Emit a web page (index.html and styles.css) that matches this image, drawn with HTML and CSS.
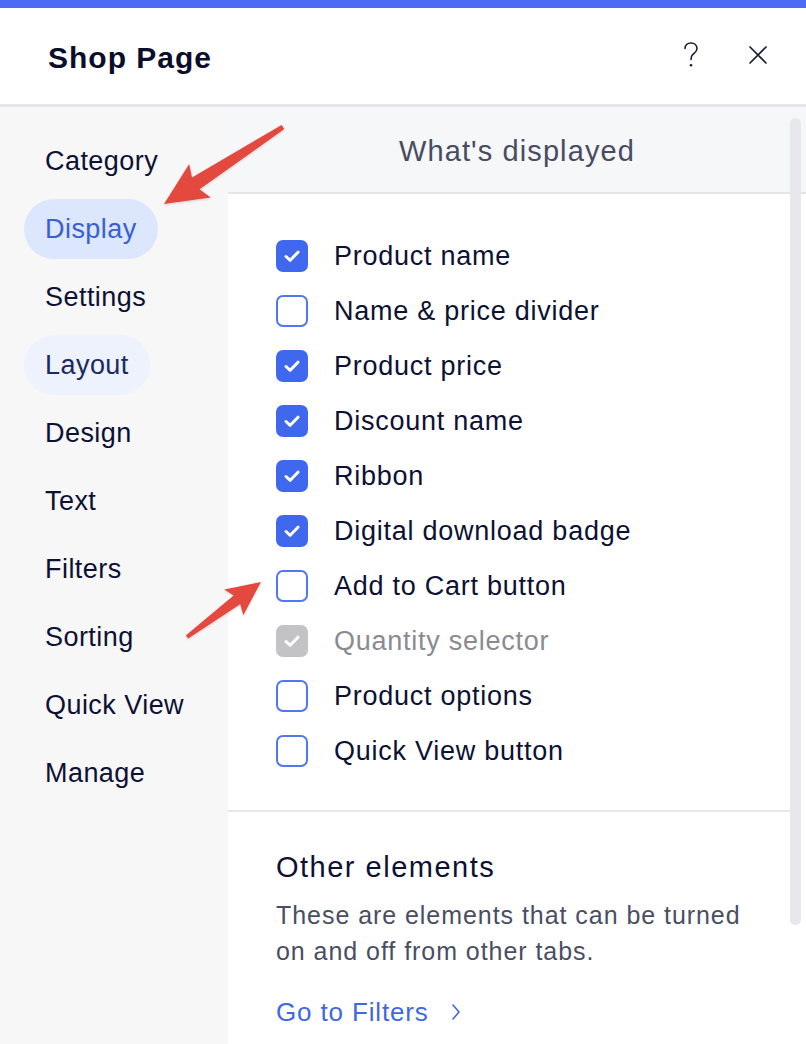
FILE: index.html
```html
<!DOCTYPE html>
<html>
<head>
<meta charset="utf-8">
<link rel="stylesheet" href="styles.css">
</head>
<body>
<div class="page">
  <div class="topbar"></div>
  <header class="header">
    <h1 class="title">Shop Page</h1>
    <div class="actions">
      <svg class="icon-help" width="16" height="26" viewBox="0 0 16 26"><path d="M2 6.5 C2 3 4.6 1 8 1 C11.4 1 14 3.2 14 6.5 C14 9.6 11.6 10.9 9.9 12.4 C8.6 13.5 8 14.8 8 17.5" fill="none" stroke="#1a1d33" stroke-width="1.6" stroke-linecap="round"/><circle cx="8" cy="23.2" r="1.3" fill="#1a1d33"/></svg>
      <svg class="icon-close" width="20" height="20" viewBox="0 0 20 20"><path d="M2 2 L18 18 M18 2 L2 18" stroke="#1a1d33" stroke-width="1.7" stroke-linecap="round"/></svg>
    </div>
  </header>
  <div class="body">
    <nav class="nav">
      <div class="nav-item">Category</div>
      <div class="nav-item active">Display</div>
      <div class="nav-item">Settings</div>
      <div class="nav-item hover">Layout</div>
      <div class="nav-item">Design</div>
      <div class="nav-item">Text</div>
      <div class="nav-item">Filters</div>
      <div class="nav-item">Sorting</div>
      <div class="nav-item">Quick View</div>
      <div class="nav-item">Manage</div>
    </nav>
    <main class="main">
      <div class="section-head">What's displayed</div>
      <ul class="list">
        <li class="row"><span class="cb checked"><svg viewBox="0 0 32 32"><path d="M10 16.5 L14.2 20.3 L22 12.2" fill="none" stroke="#fff" stroke-width="3" stroke-linecap="round" stroke-linejoin="round"/></svg></span><span class="label">Product name</span></li>
        <li class="row"><span class="cb"></span><span class="label">Name &amp; price divider</span></li>
        <li class="row"><span class="cb checked"><svg viewBox="0 0 32 32"><path d="M10 16.5 L14.2 20.3 L22 12.2" fill="none" stroke="#fff" stroke-width="3" stroke-linecap="round" stroke-linejoin="round"/></svg></span><span class="label">Product price</span></li>
        <li class="row"><span class="cb checked"><svg viewBox="0 0 32 32"><path d="M10 16.5 L14.2 20.3 L22 12.2" fill="none" stroke="#fff" stroke-width="3" stroke-linecap="round" stroke-linejoin="round"/></svg></span><span class="label">Discount name</span></li>
        <li class="row"><span class="cb checked"><svg viewBox="0 0 32 32"><path d="M10 16.5 L14.2 20.3 L22 12.2" fill="none" stroke="#fff" stroke-width="3" stroke-linecap="round" stroke-linejoin="round"/></svg></span><span class="label">Ribbon</span></li>
        <li class="row"><span class="cb checked"><svg viewBox="0 0 32 32"><path d="M10 16.5 L14.2 20.3 L22 12.2" fill="none" stroke="#fff" stroke-width="3" stroke-linecap="round" stroke-linejoin="round"/></svg></span><span class="label">Digital download badge</span></li>
        <li class="row"><span class="cb"></span><span class="label">Add to Cart button</span></li>
        <li class="row disabled"><span class="cb checked"><svg viewBox="0 0 32 32"><path d="M10 16.5 L14.2 20.3 L22 12.2" fill="none" stroke="#fff" stroke-width="3" stroke-linecap="round" stroke-linejoin="round"/></svg></span><span class="label">Quantity selector</span></li>
        <li class="row"><span class="cb"></span><span class="label">Product options</span></li>
        <li class="row"><span class="cb"></span><span class="label">Quick View button</span></li>
      </ul>
      <div class="divider"></div>
      <section class="other">
        <h2 class="other-title">Other elements</h2>
        <p class="other-desc">These are elements that can be turned on and off from other tabs.</p>
        <a class="link">Go to Filters <svg class="chev" width="10" height="18" viewBox="0 0 10 18"><path d="M2 2 L8 9 L2 16" fill="none" stroke="#3f68e2" stroke-width="1.6" stroke-linecap="round" stroke-linejoin="round"/></svg></a>
      </section>
      <div class="scrollbar"></div>
    </main>
  </div>
  <svg class="arrows" width="806" height="1044" viewBox="0 0 806 1044">
    <defs>
      <filter id="sh" x="-20%" y="-20%" width="140%" height="140%">
        <feDropShadow dx="0" dy="1" stdDeviation="1.2" flood-color="#000" flood-opacity="0.18"/>
      </filter>
    </defs>
    <polygon filter="url(#sh)" fill="#e4493f" points="164,204 189.2,163.9 192,177.5 281.6,124.9 284.4,129.1 199.6,189.3 210.8,197.5"/>
    <polygon filter="url(#sh)" fill="#e4493f" points="261,582 224.2,589.5 233.6,595.5 185.8,635.4 188.2,638.6 240.2,604.3 243.3,615.2"/>
  </svg>
</div>
</body>
</html>
```

FILE: styles.css
```css
* { box-sizing: border-box; }
html, body { margin: 0; padding: 0; }
body {
  font-family: "Liberation Sans", Arial, sans-serif;
  color: #0d1133;
  background: #fff;
}
.page {
  position: relative;
  width: 806px;
  height: 1044px;
  overflow: hidden;
}
.topbar {
  height: 8px;
  background: #4a6cf4;
}
.header {
  display: flex;
  align-items: center;
  padding: 0 38px 0 48px;
  border-bottom: 3px solid #e2e5ea;
  height: 99px;
}
.title {
  margin: 0;
  font-size: 30px;
  font-weight: 700;
  letter-spacing: 1px;
  color: #0b0e2b;
  padding-top: 4px;
}
.actions {
  margin-left: auto;
  display: flex;
  align-items: center;
  gap: 49px;
  padding-bottom: 2px;
}
.icon-help, .icon-close { display: block; }
.body {
  display: flex;
  height: 937px;
}
.nav {
  width: 228px;
  flex: none;
  background: #f7f7f8;
  padding: 24px 0 0 24px;
  display: flex;
  flex-direction: column;
  align-items: flex-start;
  gap: 8px;
}
.nav-item {
  height: 60px;
  display: flex;
  align-items: center;
  padding: 0 21px;
  border-radius: 30px;
  font-size: 27px;
  letter-spacing: 0.45px;
  color: #0d1133;
}
.nav-item.active {
  background: #dce6fd;
  color: #3a5ed6;
}
.nav-item.hover {
  background: #eef2fc;
  color: #1d2a62;
}
.main {
  flex: 1;
  position: relative;
  background: #fff;
}
.section-head {
  height: 87px;
  background: #f6f7f8;
  border-bottom: 2px solid #e3e5ea;
  display: flex;
  align-items: center;
  justify-content: center;
  font-size: 29px;
  letter-spacing: 1.1px;
  color: #484c62;
  padding-top: 4px;
}
.list {
  list-style: none;
  margin: 0;
  padding: 34px 0 32px 48px;
}
.row {
  height: 55px;
  display: flex;
  align-items: center;
}
.cb {
  width: 32px;
  height: 32px;
  flex: none;
  border-radius: 7px;
  border: 2px solid #5276f2;
  background: #fff;
  margin-right: 26px;
  display: flex;
}
.cb svg { width: 32px; height: 32px; margin: -2px; display: block; flex: none; }
.cb.checked {
  background: #4068ef;
  border-color: #4068ef;
}
.label {
  font-size: 27px;
  letter-spacing: 0.75px;
  color: #0d1133;
  padding-top: 1px;
}
.row.disabled .cb {
  background: #c3c3c5;
  border-color: #c3c3c5;
}
.row.disabled .label { color: #8a8b91; }
.divider {
  height: 2px;
  background: #e6e7eb;
  margin-right: 16px;
}
.other {
  padding: 38px 48px 0 48px;
}
.other-title {
  margin: 0;
  font-size: 29px;
  font-weight: 400;
  line-height: 34px;
  letter-spacing: 1.5px;
  color: #0d1133;
}
.other-desc {
  margin: 13px 0 0;
  font-size: 25px;
  line-height: 36px;
  letter-spacing: 0.95px;
  color: #4a4e64;
  width: 480px;
}
.link {
  margin-top: 26px;
  display: flex;
  align-items: center;
  font-size: 26px;
  line-height: 34px;
  letter-spacing: 0.85px;
  color: #3f68e2;
}
.chev { margin-left: 22px; display: block; }
.scrollbar {
  position: absolute;
  right: 5px;
  top: 11px;
  width: 11px;
  height: 807px;
  border-radius: 6px;
  background: #e8e8ec;
}
.arrows {
  position: absolute;
  left: 0;
  top: 0;
  pointer-events: none;
}
```
